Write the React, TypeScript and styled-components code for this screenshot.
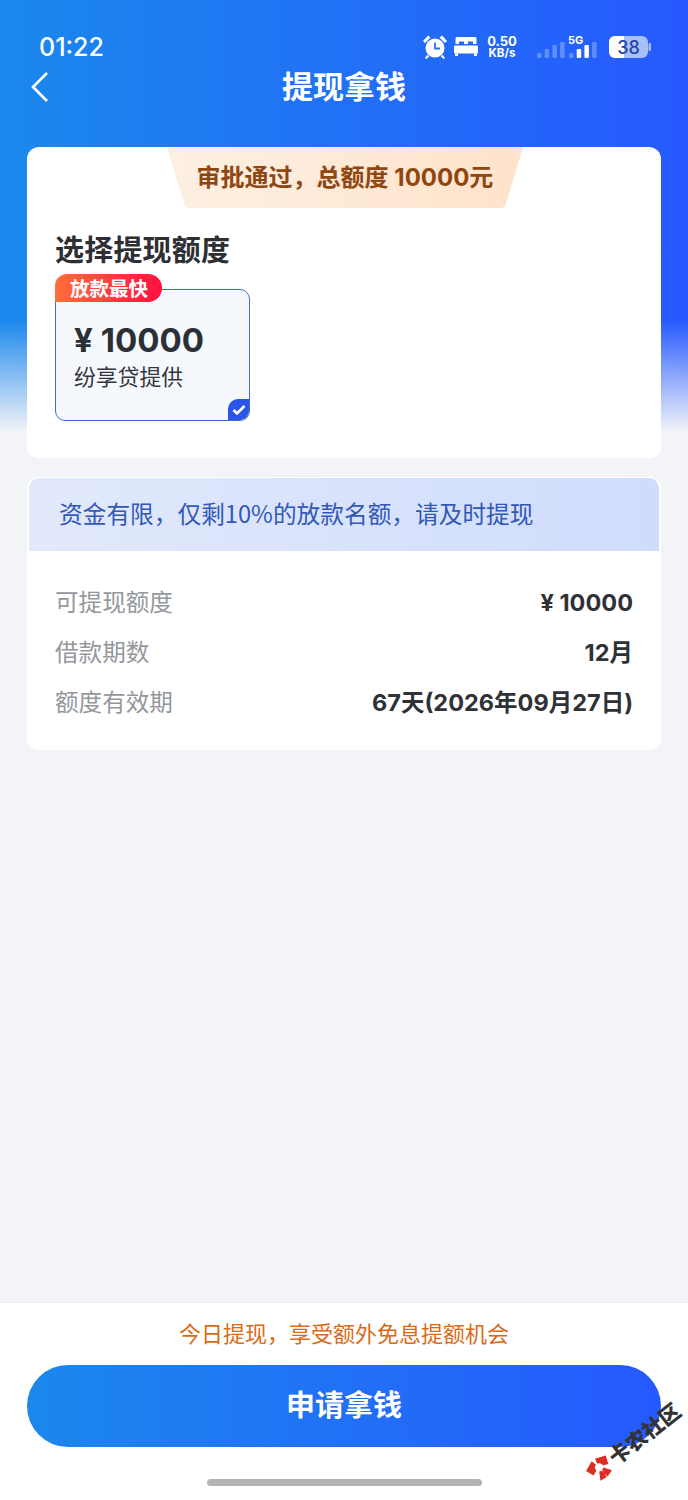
import React from "react";
import styled, { createGlobalStyle } from "styled-components";

const CN = `"Noto Sans CJK SC", "Noto Sans", sans-serif`;
const NUM = `Inter, "Noto Sans CJK SC", sans-serif`;

const Global = createGlobalStyle`
  html, body { margin: 0; padding: 0; background: #f2f4f8; }
  * { box-sizing: border-box; }
`;

const Page = styled.div`
  position: relative;
  width: 688px;
  height: 1500px;
  overflow: hidden;
  display: flex;
  flex-direction: column;
  font-family: ${CN};
  background:
    linear-gradient(180deg, rgba(242,244,248,0) 320px, #f2f4f8 432px),
    linear-gradient(90deg, #1b88ec 0%, #2659ff 100%);
`;

const StatusBar = styled.div`
  height: 68px;
  padding: 33px 37px 0 39px;
  display: flex;
  justify-content: space-between;
  color: #fff;
`;

const Clock = styled.span`
  font: 500 25px/29px ${NUM};
`;

const StatusIcons = styled.div`
  display: flex;
  align-items: center;
  height: 28px;
`;

const Speed = styled.div`
  width: 30px;
  margin: 0 19px 0 9px;
  text-align: center;
  font-weight: 700;
  font-family: ${NUM};
`;

const SpeedValue = styled.div`
  font-size: 13px;
  line-height: 13px;
`;

const SpeedUnit = styled.div`
  font-size: 11.5px;
  line-height: 11px;
`;

const SignalSlot = styled.div<{ $width: number; $gap: number }>`
  position: relative;
  width: ${(p) => p.$width}px;
  height: 26px;
  margin-right: ${(p) => p.$gap}px;
`;

const FiveG = styled.span`
  position: absolute;
  left: 0;
  top: 1px;
  font: 700 11px/11px ${NUM};
`;

const Nav = styled.div`
  position: relative;
  height: 40px;
  margin-bottom: 39px;
  display: flex;
  align-items: center;
  justify-content: center;
`;

const BackButton = styled.span`
  position: absolute;
  left: 30px;
  top: 3px;
  display: flex;
`;

const Title = styled.h1`
  margin: -6px 0 0;
  color: #fff;
  font: 700 31px/40px ${CN};
`;

const Content = styled.div`
  padding: 0 27px;
  display: flex;
  flex-direction: column;
  gap: 19px;
`;

const Card = styled.section`
  background: #fff;
  border-radius: 12px;
  overflow: hidden;
`;

const ChooseCard = styled(Card)`
  height: 311px;
  display: flex;
  flex-direction: column;
  align-items: flex-start;
`;

const Approval = styled.div`
  align-self: center;
  width: 356px;
  height: 61px;
  margin-left: 2px;
  display: flex;
  align-items: center;
  justify-content: center;
  clip-path: polygon(0 0, 100% 0, 95% 97%, 94% 100%, 6% 100%, 5% 97%);
  background: linear-gradient(90deg, #fdf0e2, #ffe3cb);
  color: #8f4611;
  font: 700 24px/30px ${NUM};
`;

const SectionTitle = styled.h2`
  margin: 23px 0 0 28px;
  color: #2d2f33;
  font: 700 29px/34px ${CN};
  letter-spacing: 0.2px;
`;

const AmountWrap = styled.div`
  position: relative;
  margin: 24px 0 0 28px;
`;

const AmountOption = styled.div`
  position: relative;
  width: 195px;
  height: 132px;
  padding: 29px 18px 0;
  border: 1px solid #3d6fd0;
  border-radius: 10px;
  overflow: hidden;
  background: #f5f8fd;
`;

const Amount = styled.div`
  display: flex;
  align-items: center;
  gap: 8px;
  color: #2b2f36;
  font: 700 33px/42px ${NUM};
`;

const Provider = styled.div`
  color: #33363b;
  font: 400 21.8px/30px ${CN};
`;

const Tag = styled.span`
  position: absolute;
  left: 0;
  top: -15px;
  width: 107px;
  height: 28px;
  padding-left: 1px;
  border-radius: 12px 14px 14px 0;
  background: linear-gradient(90deg, #ff6f3a, #ff1041);
  color: #fff;
  font: 700 19.5px/27px ${CN};
  text-align: center;
`;

const Check = styled.span`
  position: absolute;
  right: -1px;
  bottom: -1px;
  width: 22px;
  height: 22px;
  border-radius: 10px 0 10px 0;
  background: #2a55e8;
  display: flex;
  align-items: center;
  justify-content: center;
`;

const Notice = styled.div`
  height: 74px;
  padding-left: 30px;
  border: solid #fff;
  border-width: 1px 2px 0;
  border-radius: 12px 12px 0 0;
  background: linear-gradient(90deg, #e2e9fb, #cfdcfb);
  color: #3158b8;
  font: 400 23.7px/70px ${CN};
`;

const Rows = styled.div`
  height: 199px;
  padding: 32px 28px 0;
  display: flex;
  flex-direction: column;
  gap: 12px;
`;

const Row = styled.div`
  display: flex;
  justify-content: space-between;
  font: 400 23.6px/36px ${CN};
  color: #94979c;
`;

const RowValue = styled.span`
  padding-top: 2px;
  color: #2e3136;
  font: 700 23.5px/36px ${NUM};
`;

const Footer = styled.footer`
  margin-top: auto;
  height: 198px;
  padding: 13px 27px 0;
  background: #fff;
  border-top: 1px solid #eceef2;
  display: flex;
  flex-direction: column;
  align-items: center;
`;

const Promo = styled.div`
  color: #dc6a14;
  font: 400 22px/32px ${CN};
`;

const ApplyButton = styled.button`
  width: 100%;
  height: 82px;
  margin-top: 17px;
  padding: 0 0 6px;
  border: 0;
  border-radius: 41px;
  background: linear-gradient(90deg, #1b88ec, #2659ff);
  color: #fff;
  font: 700 29px/76px ${CN};
`;

const HomeBar = styled.div`
  width: 275px;
  height: 7px;
  margin-top: 32px;
  border-radius: 4px;
  background: #b4b4b6;
`;

const Watermark = styled.div`
  position: absolute;
  left: 586px;
  top: 1454px;
  display: flex;
  align-items: center;
  gap: 1px;
  transform: rotate(-38deg);
  transform-origin: 13px 14px;
  color: #333;
  font: 900 21px/24px ${CN};
  white-space: nowrap;
`;

const AlarmIcon = () => (
  <svg width="26" height="26" viewBox="0 0 26 26" fill="#fff" style={{ marginRight: 6 }}>
    <circle cx="13" cy="14" r="9.5" />
    <path d="M1 7l5-5.500 2.500 2-5.500 5.500zM25 7l-5-5.500-2.500 2 5.500 5.500zM5 21l-2 3 1.500 1 3-3zM21 21l2 3-1.500 1-3-3z" />
    <path d="M13 8.500V14.500H18" fill="none" stroke="#2a70f4" strokeWidth="1.800" />
  </svg>
);

const BedIcon = () => (
  <svg width="24" height="20" viewBox="0 0 24 20" fill="#fff">
    <path d="M3 0h18a1.500 1.500 0 0 1 1.500 1.500V7H19V4.500h-5V7h-4V4.500H5V7H1.500V1.500A1.500 1.500 0 0 1 3 0z" />
    <rect x="0" y="8.500" width="24" height="8" rx="1" />
    <rect x="1" y="16.500" width="3" height="2.500" />
    <rect x="20" y="16.500" width="3" height="2.500" />
  </svg>
);

const SignalBars = ({ lit }: { lit: number[] }) => (
  <svg width="32" height="26" viewBox="0 0 32 26">
    {[5, 9, 13, 16].map((h, i) => (
      <rect
        key={i}
        x={1 + i * 7.700}
        y={24 - h}
        width="4.500"
        height={h}
        rx="1.200"
        fill="#fff"
        opacity={lit.includes(i) ? 1 : 0.28}
      />
    ))}
  </svg>
);

const BatteryIcon = () => (
  <svg width="42" height="24" viewBox="0 0 42 24">
    <rect x="0" y="1" width="39" height="22" rx="6" fill="#a8bff8" />
    <path d="M6 1h9v22H6a6 6 0 0 1-6-6V7a6 6 0 0 1 6-6z" fill="#fff" />
    <rect x="39.500" y="8" width="2.500" height="8" rx="1" fill="#a8bff8" />
    <text x="19.500" y="18.500" textAnchor="middle" fill="#2444ad" fontSize="18" fontWeight="500" fontFamily="Inter">38</text>
  </svg>
);

const WatermarkLogo = () => (
  <svg width="27" height="27" viewBox="0 0 26 26">
    <path d="M1 8l10-4 2 8-9 4zM25 8l-10-4-2 8 9 4zM6 24l6-10 2 1-1 10zM21 23l-6-9-2 1 1 10z" fill="#e02d22" />
    <circle cx="13" cy="13" r="4" fill="#fff" />
  </svg>
);

export default function App() {
  return (
    <Page>
      <Global />
      <StatusBar>
        <Clock>01:22</Clock>
        <StatusIcons>
          <AlarmIcon />
          <BedIcon />
          <Speed>
            <SpeedValue>0.50</SpeedValue>
            <SpeedUnit>KB/s</SpeedUnit>
          </Speed>
          <SignalSlot $width={26} $gap={6}>
            <SignalBars lit={[]} />
          </SignalSlot>
          <SignalSlot $width={32} $gap={9}>
            <FiveG>5G</FiveG>
            <SignalBars lit={[1, 2]} />
          </SignalSlot>
          <BatteryIcon />
        </StatusIcons>
      </StatusBar>

      <Nav>
        <BackButton>
          <svg width="20" height="32" viewBox="0 0 20 32" fill="none" stroke="#fff" strokeWidth="2.600">
            <path d="M17 2L3 16l14 14" />
          </svg>
        </BackButton>
        <Title>提现拿钱</Title>
      </Nav>

      <Content>
        <ChooseCard>
          <Approval>审批通过，总额度 10000元</Approval>
          <SectionTitle>选择提现额度</SectionTitle>
          <AmountWrap>
            <AmountOption>
              <Amount>
                <span>¥</span>
                <span>10000</span>
              </Amount>
              <Provider>纷享贷提供</Provider>
              <Check>
                <svg width="14" height="12" viewBox="0 0 14 12" fill="none" stroke="#fff" strokeWidth="2.600">
                  <path d="M1.500 6l3.500 3.500L12.500 2" />
                </svg>
              </Check>
            </AmountOption>
            <Tag>放款最快</Tag>
          </AmountWrap>
        </ChooseCard>

        <Card>
          <Notice>资金有限，仅剩10%的放款名额，请及时提现</Notice>
          <Rows>
            <Row>
              可提现额度
              <RowValue>¥ 10000</RowValue>
            </Row>
            <Row>
              借款期数
              <RowValue>12月</RowValue>
            </Row>
            <Row>
              额度有效期
              <RowValue>67天(2026年09月27日)</RowValue>
            </Row>
          </Rows>
        </Card>
      </Content>

      <Footer>
        <Promo>今日提现，享受额外免息提额机会</Promo>
        <ApplyButton>申请拿钱</ApplyButton>
        <HomeBar />
      </Footer>

      <Watermark>
        <WatermarkLogo />
        卡农社区
      </Watermark>
    </Page>
  );
}
